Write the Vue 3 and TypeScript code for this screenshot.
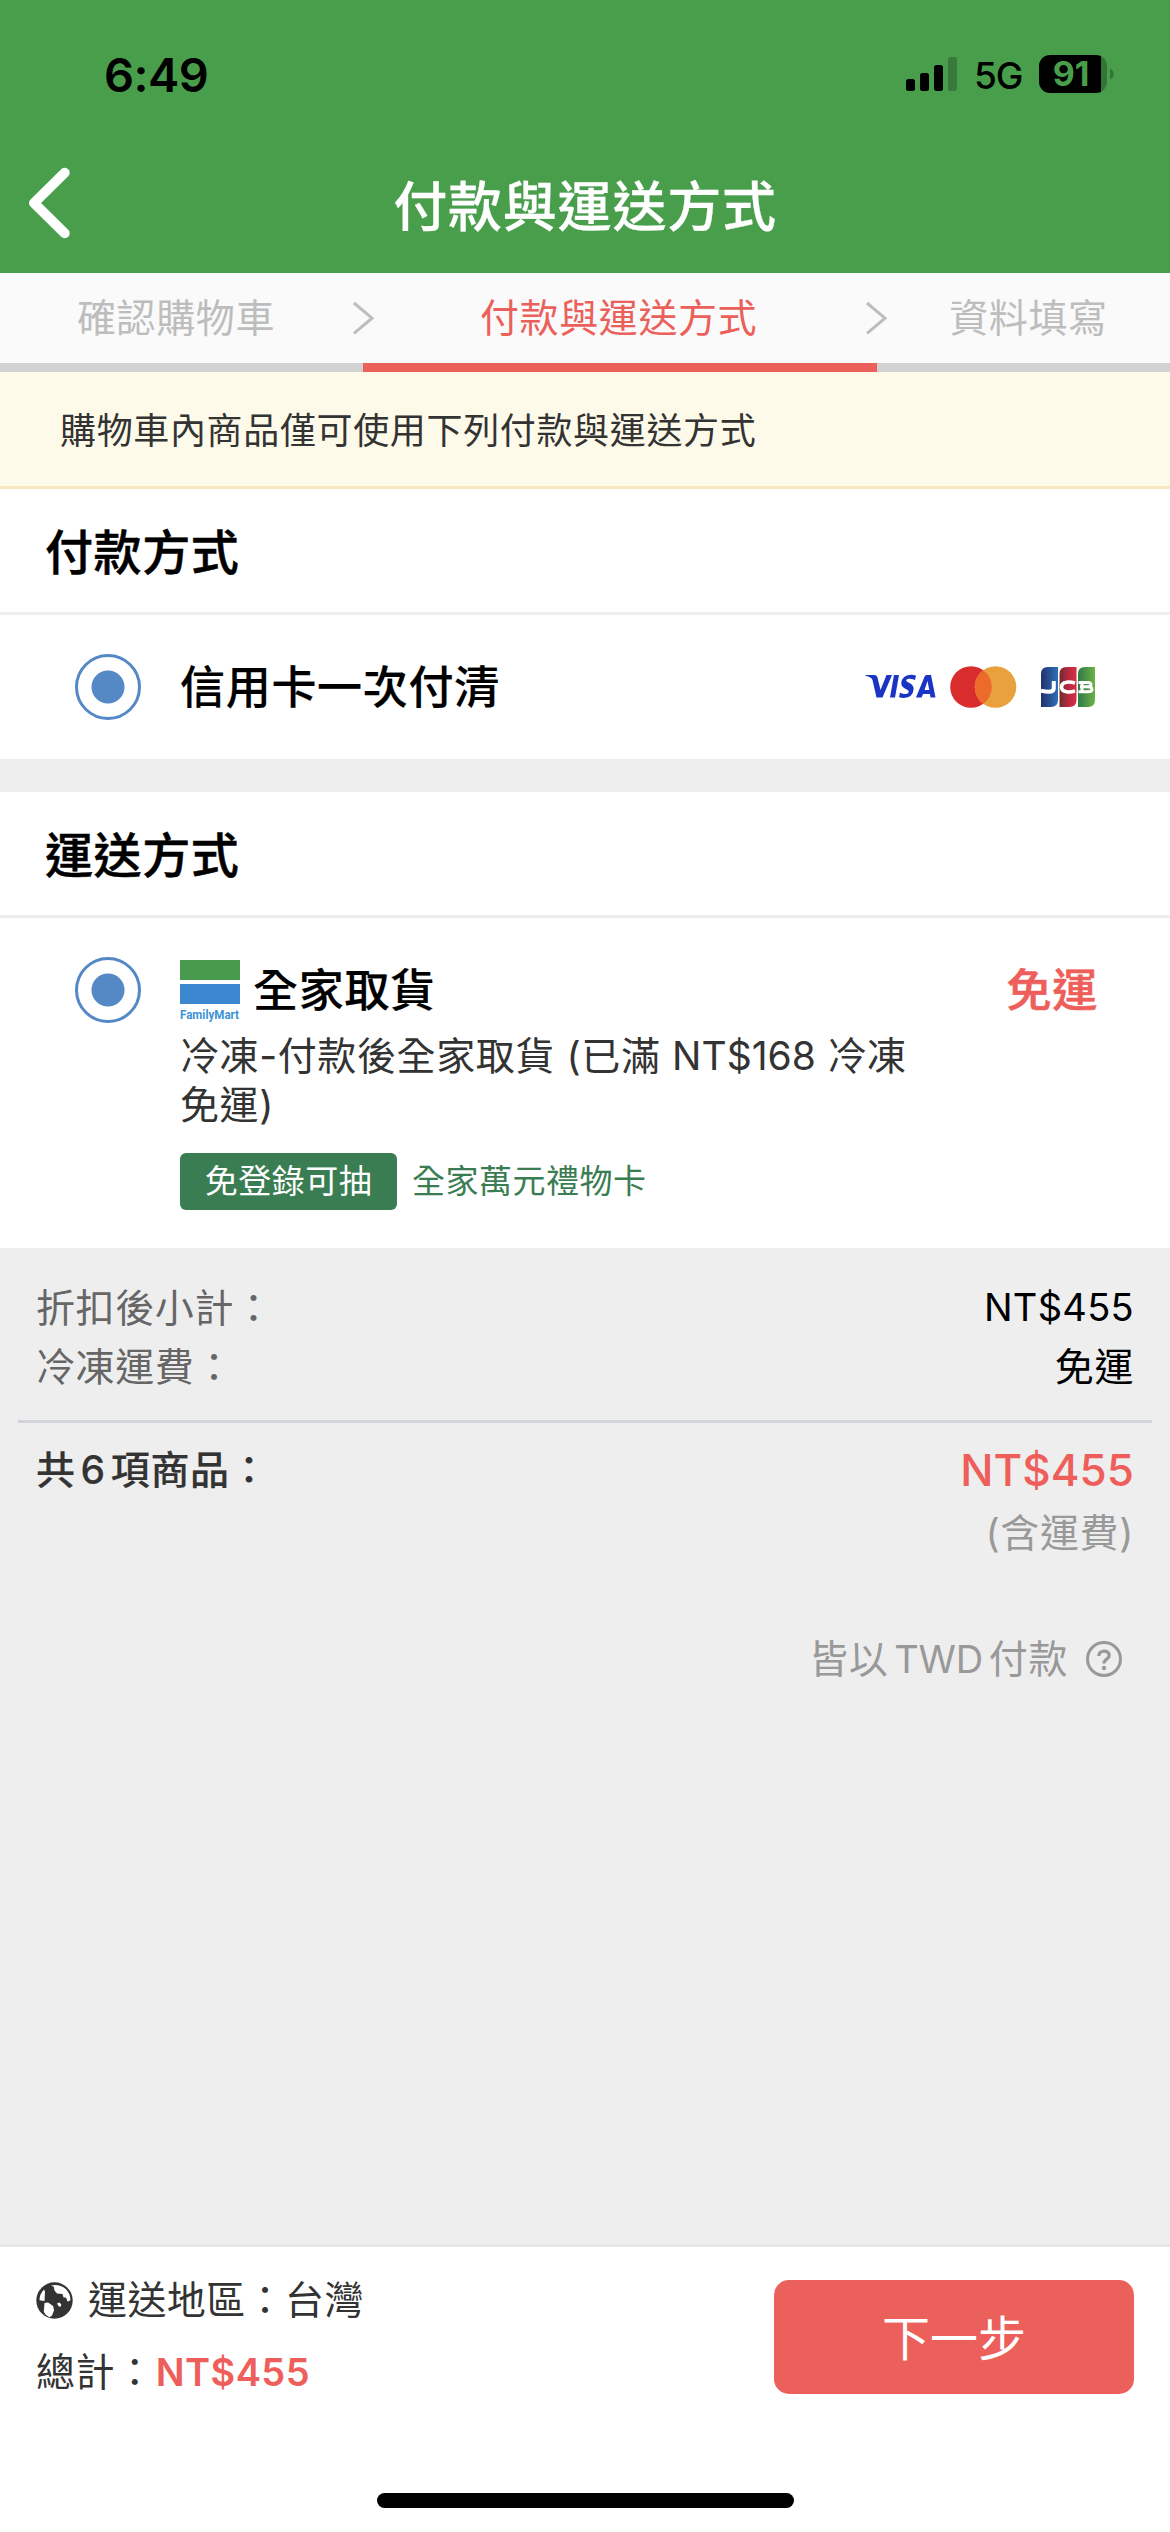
<script setup lang="ts">
interface Step {
  label: string
  active: boolean
}

interface SummaryRow {
  label: string
  value: string
  latin: boolean
}

const steps: Step[] = [
  { label: '確認購物車', active: false },
  { label: '付款與運送方式', active: true },
  { label: '資料填寫', active: false },
]

const summary: SummaryRow[] = [
  { label: '折扣後小計：', value: 'NT$455', latin: true },
  { label: '冷凍運費：', value: '免運', latin: false },
]
</script>

<template>
  <div class="screen">
    <header class="header">
      <div class="status">
        <span class="time">6:49</span>
        <svg class="signal" width="52" height="36" viewBox="0 0 52 36">
          <rect x="0" y="23" width="9" height="12" rx="2.5" />
          <rect x="14" y="17" width="9" height="18" rx="2.5" />
          <rect x="28" y="9" width="9" height="26" rx="2.5" />
          <rect x="42" y="1" width="9" height="34" rx="2.5" fill="#377a3b" />
        </svg>
        <span class="network">5G</span>
        <div class="battery"><span>91</span></div>
        <svg class="nub" width="5" height="12" viewBox="0 0 5 12">
          <path d="M0 0.5C5 2.5 5 9.500 0 11.500Z" fill="#357439" />
        </svg>
      </div>
      <div class="nav">
        <svg class="back" width="46" height="76" viewBox="0 0 46 76">
          <path d="M39.700 7.700L9 38L39.700 68.300" fill="none" stroke="#fff" stroke-width="10" stroke-linecap="round" stroke-linejoin="round" />
        </svg>
        <h1>付款與運送方式</h1>
      </div>
    </header>

    <nav class="steps">
      <template v-for="(step, i) in steps" :key="step.label">
        <svg v-if="i > 0" class="sep" width="24" height="34" viewBox="0 0 24 34">
          <path d="M2 2L20 17.200L2 32.400" fill="none" stroke="#bdbdbd" stroke-width="3" />
        </svg>
        <span class="step" :class="{ active: step.active }">{{ step.label }}</span>
      </template>
    </nav>
    <div class="progress"><i></i></div>

    <p class="notice">購物車內商品僅可使用下列付款與運送方式</p>

    <section class="card">
      <h2>付款方式</h2>
      <div class="option pay">
        <span class="radio"></span>
        <span class="label">信用卡一次付清</span>
        <div class="brands">
          <svg width="72" height="26" viewBox="0 0 72 26">
            <g fill="#1a34c4">
              <path d="M0.500 1H9Q12 1 12.600 4L15.500 16L21.500 1H27L17.500 23.500H11.500L7.500 6Q6.500 3 0.500 1.800Z" />
              <path d="M29 1H34L30 23.500H25Z" />
              <path d="M51 1.700L50 6.100Q46.500 4.600 43.500 4.800Q41 5.200 41.200 6.700Q41.400 7.700 44.500 9.100Q49 11.200 48.600 15.500Q47.800 23.500 38.800 24Q36 24.100 34 23L35 18.700Q38.500 20.300 41 20Q43.700 19.500 43.800 17.700Q43.800 16.500 40.300 14.800Q36 12.500 36.300 9Q37 1.500 45.500 .8Q49 .7 51 1.700Z" />
              <path fill-rule="evenodd" d="M61.500 1H66L70.500 23.500H65.500L65 20H58L56.600 23.500H51L59.500 2.700Q60.200 1 61.500 1ZM62.500 7L59.500 16H64.300Z" />
            </g>
          </svg>
          <svg width="67" height="42" viewBox="0 0 67 42">
            <circle cx="21" cy="21" r="20.800" fill="#d82d2c" />
            <circle cx="45.500" cy="21" r="20.800" fill="#e9a13e" />
            <path d="M33.250 4.200A20.800 20.800 0 0 1 33.250 37.800A20.800 20.800 0 0 1 33.250 4.200Z" fill="#ec6a2c" />
          </svg>
          <svg width="54" height="40" viewBox="0 0 54 40">
            <defs>
              <linearGradient id="jcbBlue"><stop offset="0" stop-color="#23306f" /><stop offset="1" stop-color="#2d71b5" /></linearGradient>
              <linearGradient id="jcbRed"><stop offset="0" stop-color="#6f2b33" /><stop offset=".6" stop-color="#c02a40" /><stop offset="1" stop-color="#d42f49" /></linearGradient>
              <linearGradient id="jcbGreen"><stop offset="0" stop-color="#307a49" /><stop offset="1" stop-color="#6cb246" /></linearGradient>
            </defs>
            <path d="M7 0H17V33Q17 40 10 40H0V7Q0 0 7 0Z" fill="url(#jcbBlue)" />
            <path d="M25.500 0H35.500V33Q35.500 40 28.500 40H18.500V7Q18.500 0 25.500 0Z" fill="url(#jcbRed)" />
            <path d="M44 0H54V33Q54 40 47 40H37V7Q37 0 44 0Z" fill="url(#jcbGreen)" />
            <g fill="none" stroke="#fff">
              <path d="M12.800 14V21.500Q12.500 24.800 8 24.800Q4 24.800 0 23.600" stroke-width="4" />
              <path d="M34 16Q29 14.500 25.500 15.200Q20.500 16 20.500 20Q20.500 24 25.500 24.800Q29 25.500 34 24" stroke-width="3.600" />
              <path d="M37.500 15.500H47Q50 15.500 50 17.500Q50 19.800 47 19.800H39M47 19.800Q51 20 51 22.300Q51 24.700 47 24.700H37.500M41 14V26" stroke-width="3" />
            </g>
          </svg>
        </div>
      </div>
    </section>

    <section class="card shipping">
      <h2>運送方式</h2>
      <div class="option ship">
        <span class="radio"></span>
        <div class="detail">
          <div class="head">
            <div class="fm">
              <i class="green"></i>
              <i class="blue"></i>
              <svg width="60" height="18" viewBox="0 0 60 18">
                <text x="0" y="11.500" textLength="59" lengthAdjust="spacingAndGlyphs">FamilyMart</text>
              </svg>
            </div>
            <span class="label">全家取貨</span>
            <span class="label free">免運</span>
          </div>
          <p class="desc">冷凍-付款後全家取貨 (已滿 <span class="latin">NT$168</span> 冷凍<br />免運)</p>
          <div class="promo">
            <span class="tag">免登錄可抽</span>
            <span class="gift">全家萬元禮物卡</span>
          </div>
        </div>
      </div>
    </section>

    <section class="summary">
      <div v-for="row in summary" :key="row.label" class="row">
        <span class="name">{{ row.label }}</span>
        <span :class="{ price: row.latin }">{{ row.value }}</span>
      </div>
      <hr />
      <div class="row total">
        <span class="count">共<b>6</b>項商品：</span>
        <span class="amount">NT$455</span>
      </div>
      <div class="included">(含運費)</div>
      <div class="currency">
        <span>皆以<b>TWD</b>付款</span>
        <svg width="36" height="36" viewBox="0 0 36 36">
          <circle cx="18" cy="18" r="16.500" fill="none" stroke="#999" stroke-width="3" />
          <path d="M12.800 15C12.800 8.500 23.200 8.500 23.200 14.500C23.200 18.500 18 17.800 18 22.500" fill="none" stroke="#999" stroke-width="3.300" />
          <circle cx="18" cy="27" r="2.200" fill="#999" />
        </svg>
      </div>
    </section>

    <footer class="footer">
      <div class="bar">
        <div class="info">
          <div class="region">
            <svg width="37" height="37" viewBox="0 0 37 37">
              <circle cx="18.500" cy="18.500" r="18.200" fill="#333" />
              <path d="M15 3.700Q18 2.700 22 3.200Q30 5 33.300 12Q34.500 15 34.300 18.500L31.500 19.500L30 15.500H27.500L26.500 12L21 11.500L18.500 8.500L17.800 4.800Z" fill="#fff" />
              <path d="M8 7.500L9 9.500L8.500 19L3.500 18.200Q3.300 12.500 8 7.500Z" fill="#fff" />
              <path d="M8.500 21L12 20.500L17.200 24L18 28.500L16 33.500L13.500 35.300Q9.500 33.500 7.800 30Z" fill="#fff" />
              <path d="M21 21.500L23.500 20.500L25.300 22.500L24.500 25L22.500 24Z" fill="#fff" />
            </svg>
            <span>運送地區：台灣</span>
          </div>
          <div class="sum">總計：<b>NT$455</b></div>
        </div>
        <button type="button" class="next">下一步</button>
      </div>
      <div class="home"></div>
    </footer>
  </div>
</template>

<style>
body {
  margin: 0;
}
</style>

<style scoped>
* {
  box-sizing: border-box;
}
.screen {
  width: 1170px;
  height: 2532px;
  display: flex;
  flex-direction: column;
  overflow: hidden;
  background: #eee;
  color: #000;
  font-family: Inter, "Noto Sans CJK TC", sans-serif;
  font-size: 39px;
  letter-spacing: 0.6px;
}
h1,
h2,
p {
  margin: 0;
}
svg {
  display: block;
  flex: none;
}
.header {
  height: 273px;
  background: #499e4c;
}
.status {
  height: 148px;
  padding: 0 55px 0 104px;
  display: flex;
  align-items: center;
  letter-spacing: 0;
}
.time {
  font-size: 47px;
  font-weight: 600;
  letter-spacing: -0.5px;
}
.signal {
  margin-left: auto;
}
.network {
  width: 49px;
  margin-left: 16px;
  font-size: 37px;
  font-weight: 500;
  letter-spacing: -1px;
  padding-top: 3px;
}
.battery {
  width: 68px;
  height: 38px;
  margin-left: 16px;
  padding-right: 4px;
  border-radius: 11px;
  background: linear-gradient(90deg, #000 62px, #357439 62px);
  color: #499e4c;
  font-size: 34px;
  font-weight: 700;
  line-height: 38px;
  text-align: center;
}
.nub {
  margin-left: 3px;
}
.nav {
  position: relative;
  height: 125px;
}
.back {
  position: absolute;
  left: 25px;
  top: 17px;
}
h1 {
  padding-top: 22px;
  color: #fff;
  font-size: 54px;
  line-height: 76px;
  font-weight: 500;
  letter-spacing: 0.8px;
  text-align: center;
  -webkit-text-stroke: 0.3px currentColor;
}
.steps {
  height: 90px;
  padding-left: 77px;
  display: flex;
  align-items: center;
  background: #fafafa;
  color: #bdbdbd;
}
.step {
  line-height: 90px;
}
.step.active {
  color: #eb605b;
}
.sep {
  margin-left: 77px;
  margin-right: 104px;
}
.active + .sep {
  margin-left: 108px;
  margin-right: 60px;
}
.progress {
  height: 9px;
  background: #d2d2d2;
}
.progress i {
  display: block;
  width: 514px;
  height: 9px;
  margin-left: 363px;
  background: #eb605b;
}
.notice {
  height: 117px;
  padding-top: 2px;
  padding-left: 60px;
  border-bottom: 3px solid #f7e7c1;
  background: #fefaea;
  color: #333;
  font-size: 36px;
  line-height: 114px;
  letter-spacing: 0.65px;
}
.card {
  background: #fff;
}
.shipping {
  margin-top: 33px;
}
h2 {
  height: 126px;
  padding-top: 2px;
  padding-left: 45px;
  border-bottom: 3px solid #ededed;
  font-size: 48px;
  font-weight: 500;
  line-height: 123px;
  letter-spacing: 0.6px;
  -webkit-text-stroke: 0.5px currentColor;
}
.option {
  display: flex;
  padding-left: 75px;
}
.radio {
  width: 66px;
  height: 66px;
  flex: none;
  border: 3px solid #5489c6;
  border-radius: 50%;
  background: radial-gradient(circle, #5489c6 16px, transparent 17px);
}
.label {
  padding-top: 1px;
  font-size: 45px;
  font-weight: 500;
  line-height: 66px;
  letter-spacing: 0.7px;
  -webkit-text-stroke: 0.2px currentColor;
}
.pay {
  height: 144px;
  align-items: center;
  padding-right: 75px;
}
.pay .label {
  margin-left: 39px;
}
.brands {
  display: flex;
  align-items: center;
  margin-left: auto;
}
.brands svg + svg {
  margin-left: 13px;
}
.brands svg:last-child {
  margin-left: 24px;
}
.ship {
  height: 330px;
  padding-top: 39px;
}
.detail {
  width: 1029px;
  padding-left: 39px;
}
.head {
  height: 66px;
  display: flex;
  padding-right: 72px;
}
.fm {
  width: 60px;
  padding-top: 3px;
}
.fm i {
  display: block;
  height: 20px;
}
.fm .green {
  margin-bottom: 4px;
  background: #489a4d;
}
.fm .blue {
  margin-bottom: 3px;
  background: #3c88d0;
}
.fm svg {
  overflow: visible;
}
.fm text {
  fill: #3c93d6;
  font-family: Roboto, sans-serif;
  font-size: 13.500px;
  font-weight: 700;
  letter-spacing: 0;
}
.head .label {
  margin-left: 13px;
}
.head .free {
  margin-left: auto;
  color: #ee5f5b;
  -webkit-text-stroke-width: 0.6px;
}
.desc {
  margin-top: 8px;
  color: #333;
  line-height: 49px;
}
.latin {
  letter-spacing: 0;
}
.promo {
  display: flex;
  margin-top: 24px;
  color: #3a7d52;
  font-size: 33px;
  line-height: 57px;
  letter-spacing: 0.5px;
}
.tag {
  width: 217px;
  margin-right: 15px;
  border-radius: 6px;
  background: #3a7d52;
  color: #fff;
  text-align: center;
}
.summary {
  flex: 1;
  padding: 30px 36px 0;
}
.row {
  display: flex;
  justify-content: space-between;
  line-height: 59px;
}
.name {
  color: #666;
}
.price {
  font-size: 38px;
  letter-spacing: 0.3px;
}
hr {
  height: 3px;
  margin: 24px -18px 17px;
  border: 0;
  background: #d1d5d9;
}
.count {
  color: #333;
  font-weight: 500;
  -webkit-text-stroke: 0.2px currentColor;
}
.count b {
  margin: 0 5px;
  font-weight: 500;
}
.amount {
  padding-top: 1px;
  color: #ee5f5b;
  font-size: 44px;
  font-weight: 500;
  letter-spacing: 0;
}
.total {
  height: 59px;
}
.included {
  margin-top: 4px;
  color: #999;
  line-height: 60px;
  text-align: right;
}
.currency {
  display: flex;
  align-items: center;
  justify-content: flex-end;
  margin-top: 66px;
  padding-right: 12px;
  color: #999;
  line-height: 60px;
}
.currency b {
  margin: 0 6px;
  font-size: 38px;
  font-weight: 400;
  letter-spacing: -0.3px;
}
.currency svg {
  margin-left: 18px;
}
.footer {
  height: 288px;
  border-top: 3px solid #e6e6e6;
  background: #fff;
  color: #333;
}
.bar {
  height: 246px;
  display: flex;
  justify-content: space-between;
  padding: 24px 36px 0;
}
.region {
  display: flex;
  align-items: center;
  gap: 15px;
  line-height: 58px;
  letter-spacing: 0.4px;
}
.sum {
  margin-top: 14px;
  line-height: 58px;
}
.sum b {
  margin-left: 1px;
  color: #ee5f5b;
  font-size: 38px;
  font-weight: 600;
  letter-spacing: 0.4px;
}
.next {
  width: 360px;
  height: 114px;
  margin-top: 9px;
  padding: 0 0 5px;
  border: 0;
  border-radius: 15px;
  background: #eb605b;
  color: #fff;
  font: inherit;
  font-size: 48px;
}
.home {
  width: 417px;
  height: 15px;
  margin: 0 auto;
  border-radius: 8px;
  background: #000;
}
</style>
